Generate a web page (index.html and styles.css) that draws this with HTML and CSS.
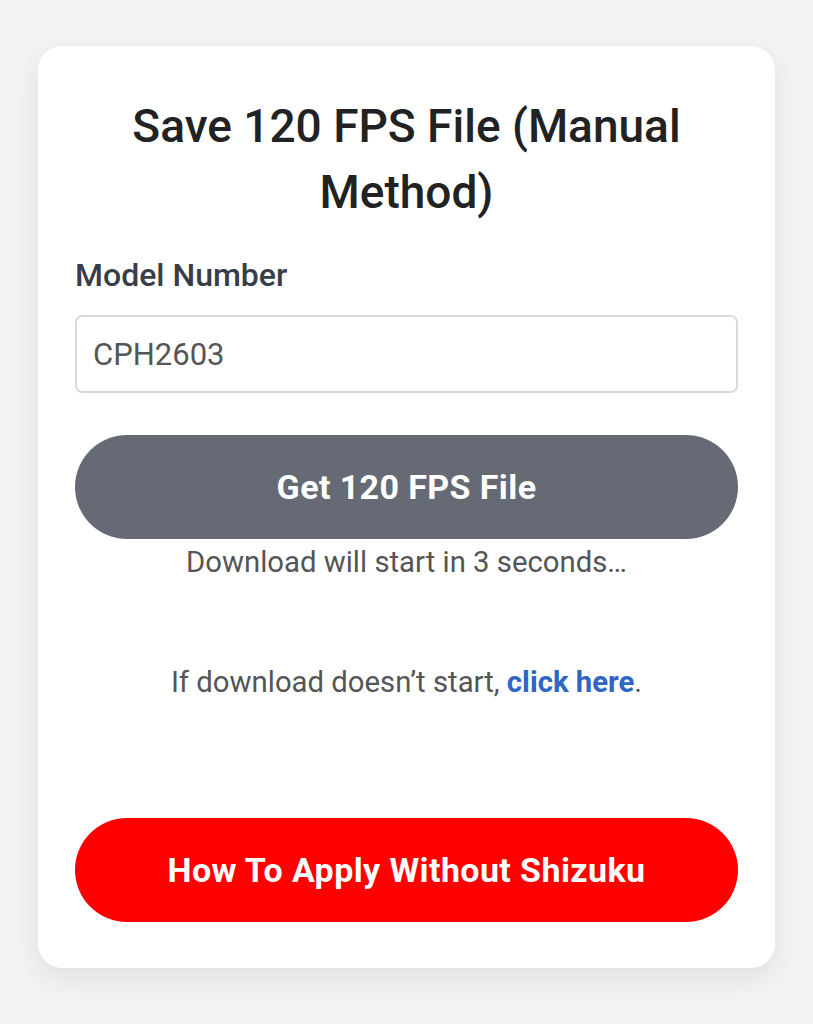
FILE: index.html
```html
<!DOCTYPE html>
<html lang="en">
<head>
    <meta charset="UTF-8">
    <meta name="viewport" content="width=device-width, initial-scale=1.0">
    <title>Save 120 FPS File</title>
    <link rel="stylesheet" href="styles.css">
</head>
<body>
    <div class="card">
        <h1>Save 120 FPS File (Manual Method)</h1>
        <label for="model">Model Number</label>
        <input type="text" id="model" value="CPH2603">
        <button class="btn btn-gray">Get 120 FPS File</button>
        <p class="status">Download will start in 3 seconds…</p>
        <p class="fallback">If download doesn’t start, <a href="#">click here</a>.</p>
        <button class="btn btn-red">How To Apply Without Shizuku</button>
    </div>
</body>
</html>
```

FILE: styles.css
```css
body {
    font-family: Roboto, "Noto Sans", sans-serif;
    margin: 0;
    background-color: #f1f2f4;
    padding: 46px 38px 56px;
}
.card {
    background-color: #fff;
    border-radius: 24px;
    box-shadow: 0 10px 24px rgba(0, 0, 0, 0.07);
    padding: 47px 37px 46px;
    display: flex;
    flex-direction: column;
}
.card h1 {
    font-size: 46px;
    font-weight: 500;
    line-height: 66px;
    text-align: center;
    color: #222;
    margin: 0 0 31px;
}
.card label {
    font-size: 32px;
    font-weight: 500;
    line-height: 38px;
    color: #383d47;
    margin-bottom: 21px;
}
.card input {
    height: 78px;
    box-sizing: border-box;
    border: 2px solid #d9dbdd;
    border-radius: 7px;
    padding: 0 16px;
    font-family: Roboto, sans-serif;
    font-size: 31px;
    color: #555;
}
.btn {
    height: 104px;
    border: none;
    border-radius: 52px;
    color: #fff;
    font-family: Roboto, sans-serif;
    font-size: 34px;
    font-weight: 700;
    letter-spacing: 0.4px;
}
.btn-gray {
    background-color: #656a74;
    margin-top: 42px;
}
.btn-red {
    background-color: #fe0000;
}
.status {
    text-align: center;
    font-size: 29.3px;
    line-height: 34px;
    color: #555;
    margin: 6px 0 0;
}
.fallback {
    text-align: center;
    font-size: 29.3px;
    line-height: 34px;
    color: #555;
    margin: 86px 0 119px;
}
.fallback a {
    color: #2e66c4;
    font-weight: 700;
    text-decoration: none;
}
```
